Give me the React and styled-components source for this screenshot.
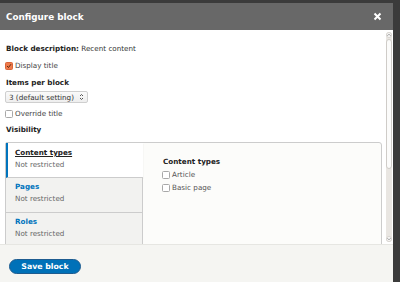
import React from "react";
import styled, { createGlobalStyle } from "styled-components";

const GlobalStyle = createGlobalStyle`
  body {
    margin: 0;
    background: #3b3b3b;
    font-family: "DejaVu Sans", "Liberation Sans", sans-serif;
  }
`;

const tabs = [
  { title: "Content types", summary: "Not restricted", active: true },
  { title: "Pages", summary: "Not restricted" },
  { title: "Roles", summary: "Not restricted" },
];

const Check = ({ checked }) => (
  <CheckBox $checked={checked}>
    {checked && (
      <svg width="6" height="6" viewBox="0 0 6 6">
        <path d="M1 3 L2.5 4.5 L5 1.2" fill="none" stroke="#5a2a14" strokeWidth="1" />
      </svg>
    )}
  </CheckBox>
);

const App = () => {
  return (
    <Page>
      <GlobalStyle />
      <Dialog>
        <TitleBar>
          <Title>Configure block</Title>
          <svg width="9" height="9" viewBox="0 0 9 9">
            <path d="M1.5 1.5 L7.5 7.5 M7.5 1.5 L1.5 7.5" stroke="#fff" strokeWidth="2" />
          </svg>
        </TitleBar>
        <Body>
          <Content>
            <Line>
              <Label>Block description:</Label> Recent content
            </Line>
            <CheckRow $top={7}>
              <Check checked />
              Display title
            </CheckRow>
            <Heading $top={7}>Items per block</Heading>
            <Select>
              <span>3 (default setting)</span>
              <svg width="5" height="8" viewBox="0 0 5 8">
                <path d="M1 3 L2.5 1.5 L4 3 M1 5 L2.5 6.5 L4 5" fill="none" stroke="#444" strokeWidth="0.9" />
              </svg>
            </Select>
            <CheckRow $top={6}>
              <Check />
              Override title
            </CheckRow>
            <Heading $top={6}>Visibility</Heading>
            <Tabs>
              <TabList>
                {tabs.map((t) => (
                  <Tab key={t.title} $active={t.active}>
                    <TabTitle $active={t.active}>{t.title}</TabTitle>
                    <Summary>{t.summary}</Summary>
                  </Tab>
                ))}
              </TabList>
              <Pane>
                <Heading $top={0}>Content types</Heading>
                <PaneOption>
                  <Check />
                  Article
                </PaneOption>
                <PaneOption>
                  <Check />
                  Basic page
                </PaneOption>
              </Pane>
            </Tabs>
          </Content>
          <Scrollbar>
            <Arrow>
              <svg width="5" height="4" viewBox="0 0 5 4">
                <path d="M0.5 3 L2.5 1 L4.5 3" fill="none" stroke="#777" strokeWidth="0.9" />
              </svg>
            </Arrow>
            <Thumb />
            <Track />
            <Arrow>
              <svg width="5" height="4" viewBox="0 0 5 4">
                <path d="M0.5 1 L2.5 3 L4.5 1" fill="none" stroke="#777" strokeWidth="0.9" />
              </svg>
            </Arrow>
          </Scrollbar>
        </Body>
        <Footer>
          <SaveButton>Save block</SaveButton>
        </Footer>
      </Dialog>
    </Page>
  );
};

export default App;

const Page = styled.div`
  width: 400px;
  height: 282px;
  overflow: hidden;
  padding-top: 3px;
  box-sizing: border-box;
`;

const Dialog = styled.div`
  width: 393px;
  height: 279px;
  display: flex;
  flex-direction: column;
`;

const TitleBar = styled.div`
  height: 27px;
  flex: none;
  background: #686868;
  display: flex;
  align-items: center;
  justify-content: space-between;
  padding: 0 11px 0 6px;
`;

const Title = styled.div`
  color: #fff;
  font-weight: bold;
  font-size: 8.8px;
`;

const Body = styled.div`
  height: 214px;
  flex: none;
  background: #fff;
  display: flex;
  overflow: hidden;
`;

const Content = styled.div`
  flex: 1;
  padding: 14px 6px 0 5px;
  font-size: 7.2px;
  color: #333;
  overflow: hidden;
`;

const Line = styled.div`
  line-height: 10px;
  padding-left: 1px;
`;

const Label = styled.span`
  font-weight: bold;
  color: #222;
`;

const Heading = styled.div`
  margin-top: ${(p) => p.$top}px;
  line-height: 10px;
  font-weight: bold;
  color: #222;
  padding-left: 1px;
`;

const CheckRow = styled.div`
  margin-top: ${(p) => p.$top}px;
  display: flex;
  align-items: center;
  gap: 2px;
  line-height: 10px;
  color: #444;
`;

const CheckBox = styled.span`
  width: 6px;
  height: 6px;
  border: 1px solid ${(p) => (p.$checked ? "#d9643a" : "#a8a8a8")};
  background: ${(p) => (p.$checked ? "#ef7b4b" : "#fff")};
  border-radius: 1.5px;
  display: flex;
  align-items: center;
  justify-content: center;
  flex: none;
`;

const Select = styled.div`
  margin-top: 3px;
  width: 83px;
  height: 12px;
  box-sizing: border-box;
  border: 1px solid #cfcfcf;
  border-radius: 2px;
  background: linear-gradient(#fafafa, #eeeeee);
  display: flex;
  align-items: center;
  justify-content: space-between;
  padding: 0 3px 0 3px;
  color: #333;
`;

const Tabs = styled.div`
  margin-top: 7px;
  width: 375px;
  height: 120px;
  display: flex;
  border: 1px solid #ccc;
  border-radius: 2px 3px 0 0;
  background: #fcfcfa;
`;

const TabList = styled.div`
  width: 137px;
  flex: none;
  display: flex;
  flex-direction: column;
  background: #f2f2f0;
`;

const Tab = styled.div`
  height: 35px;
  box-sizing: border-box;
  padding: ${(p) => (p.$active ? 5 : 4)}px 0 0 ${(p) => (p.$active ? 7 : 9)}px;
  border-left: ${(p) => (p.$active ? "2px solid #0074bd" : "none")};
  border-bottom: 1px solid #ccc;
  border-right: ${(p) => (p.$active ? "none" : "1px solid #ccc")};
  background: ${(p) => (p.$active ? "#fff" : "#f2f2f0")};
  box-shadow: ${(p) => (p.$active ? "0 1px 1px rgba(0,0,0,0.12)" : "none")};
`;

const TabTitle = styled.div`
  line-height: 10px;
  font-weight: bold;
  color: ${(p) => (p.$active ? "#222" : "#0074bd")};
  text-decoration: ${(p) => (p.$active ? "underline" : "none")};
`;

const Summary = styled.div`
  margin-top: 2px;
  line-height: 10px;
  color: #666;
`;

const Pane = styled.div`
  flex: 1;
  padding: 14px 0 0 19px;
  display: flex;
  flex-direction: column;
  gap: 3px;
`;

const PaneOption = styled.div`
  display: flex;
  align-items: center;
  gap: 2px;
  line-height: 10px;
  color: #555;
`;

const Scrollbar = styled.div`
  width: 6px;
  flex: none;
  margin: 2px 1px 2px 0;
  display: flex;
  flex-direction: column;
  background: #e9e6e2;
  border-radius: 3px;
`;

const Arrow = styled.div`
  height: 6px;
  display: flex;
  align-items: center;
  justify-content: center;
  background: #fafafa;
  border: 1px solid #d6d3cf;
  border-radius: 3px;
  box-sizing: border-box;
`;

const Thumb = styled.div`
  height: 130px;
  margin-top: 1px;
  background: #fbfbfa;
  border: 1px solid #cfccc8;
  border-radius: 3px;
  box-sizing: border-box;
`;

const Track = styled.div`
  flex: 1;
`;

const Footer = styled.div`
  flex: 1;
  display: flex;
  align-items: flex-start;
  background: #f5f5f2;
  border-top: 1px solid #e6e6e2;
  padding: 14px 0 0 9px;
`;

const SaveButton = styled.button`
  width: 72px;
  height: 15px;
  border: 1px solid #1e5c90;
  border-radius: 8px;
  background: #0071b8;
  color: #fff;
  font-family: "DejaVu Sans", sans-serif;
  font-weight: bold;
  font-size: 7.8px;
  padding: 0;
  cursor: pointer;
`;
